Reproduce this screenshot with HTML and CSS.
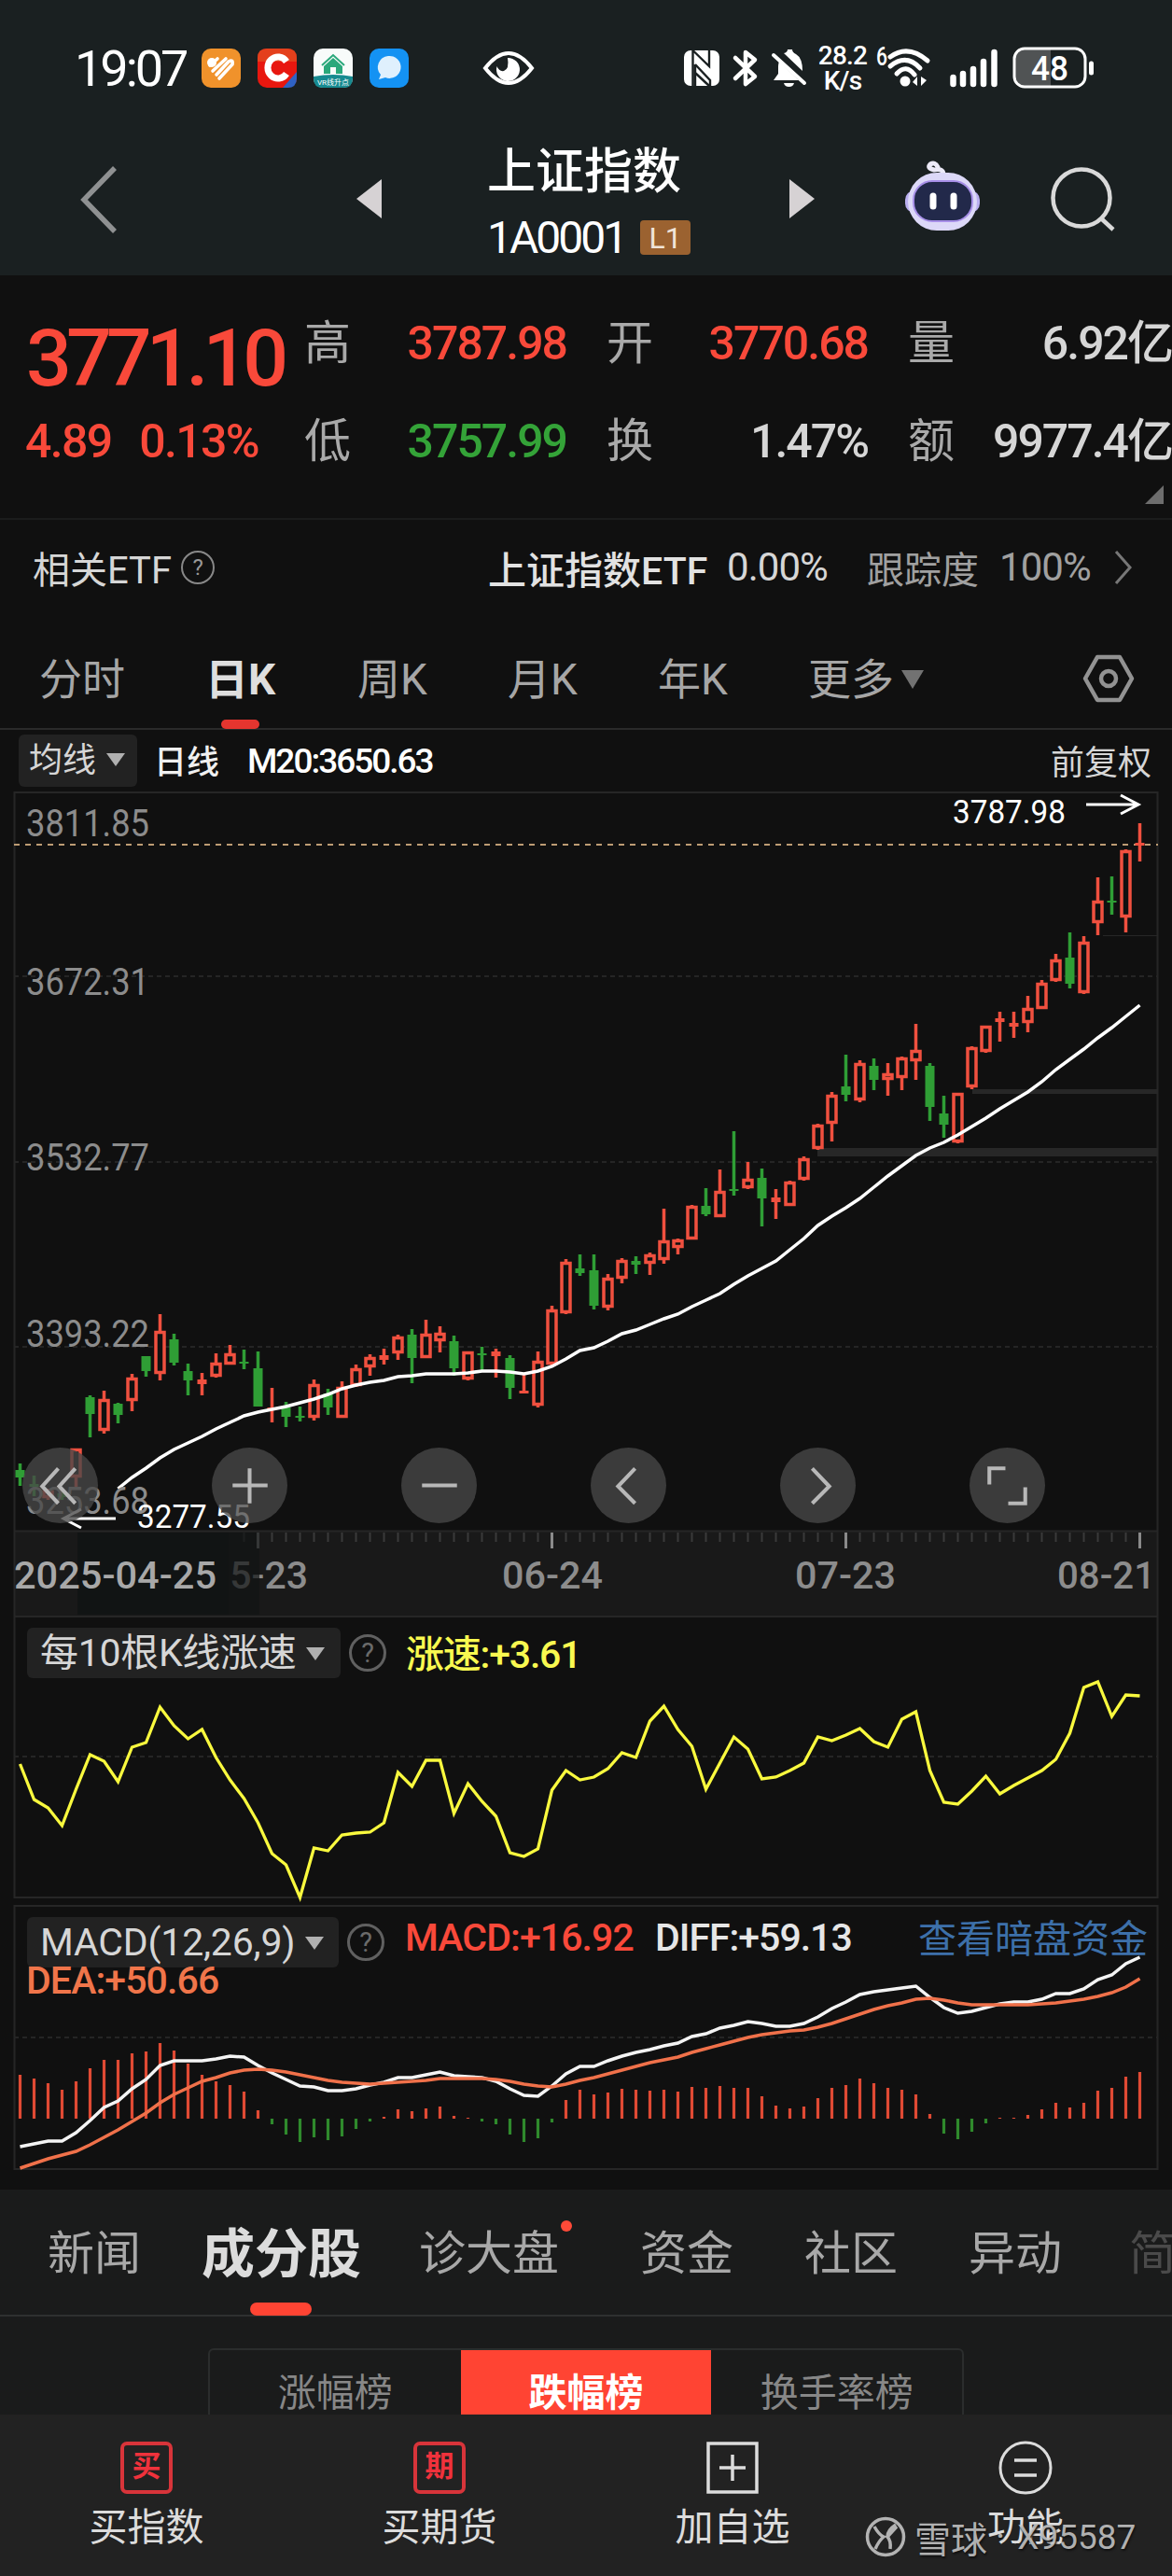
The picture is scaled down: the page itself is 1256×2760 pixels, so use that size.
FILE: index.html
```html
<!DOCTYPE html>
<html lang="zh-CN">
<head>
    <meta charset="UTF-8">
    <meta name="viewport" content="width=device-width, initial-scale=1.0">
    <title>上证指数</title>
    <link rel="stylesheet" href="styles.css">
</head>
<body>
    <div class="top">
        <div class="status-bar">
            <span class="clock">19:07</span>
            <div class="apps">
                <svg width="42" height="42" viewBox="0 0 42 42">
                    <rect width="42" height="42" rx="10" fill="#f0922b"/>
                    <path d="M9 18 L17 11 M12 24 L26 11 M16 28 L29 14 Q34 11 33 17 L19 32" fill="none" stroke="#fff" stroke-width="3.600" stroke-linecap="round"/>
                    <circle cx="11" cy="15" r="5" fill="#fff"/>
                </svg>
                <svg width="42" height="42" viewBox="0 0 42 42">
                    <rect width="42" height="42" rx="10" fill="#e8170f"/>
                    <path d="M0 14 V10 Q0 0 10 0 H32 Q42 0 42 10 V14 Z" fill="#e4401c"/>
                    <path d="M42 25 L27 42 H32 Q42 42 42 32 Z" fill="#2f62c4"/>
                    <path d="M31 14 A11 11.500 0 1 0 31 27" fill="none" stroke="#fff" stroke-width="7"/>
                </svg>
                <svg width="42" height="42" viewBox="0 0 42 42">
                    <rect width="42" height="42" rx="10" fill="#f8fbfa"/>
                    <path d="M0 30 Q21 26 42 30 V32 Q42 42 32 42 H10 Q0 42 0 32 Z" fill="#168a90"/>
                    <path d="M9 18 L21 7 L33 18" fill="none" stroke="#2aa87b" stroke-width="2"/>
                    <path d="M11 19 L21 10 L31 19 V27 H24 V20 H18 V27 H11 Z" fill="#2aa87b"/>
                    <text x="21" y="39" font-size="8" fill="#fff" text-anchor="middle">VR线升点</text>
                </svg>
                <svg width="42" height="42" viewBox="0 0 42 42">
                    <rect width="42" height="42" rx="10" fill="#1492f3"/>
                    <path d="M20 8 A12 12 0 1 1 17 31 L10 33 L12 28 A12 12 0 0 1 20 8 Z" fill="#dff0fd"/>
                </svg>
            </div>
            <svg class="eye" width="56" height="38" viewBox="0 0 56 38">
                <path d="M3 19 Q28 -13 53 19 Q28 51 3 19 Z" fill="none" stroke="#fff" stroke-width="4"/>
                <path d="M27 8 A12.500 12.500 0 1 1 15.500 17 Q18 23 23 22 Q29 20 27 8 Z" fill="#fff"/>
            </svg>
            <svg class="nfc" width="38" height="38" viewBox="0 0 38 38">
                <rect width="38" height="38" rx="7" fill="#fff"/>
                <path d="M9.500 38 V0 L27 17 V0 M12 15 L28 32 V38 M12 15 V38 M12 24 L27 38" fill="none" stroke="#1a2021" stroke-width="2.400"/>
            </svg>
            <svg class="bt" width="28" height="42" viewBox="0 0 28 42">
                <path d="M3 10 L24 30 L14 38 V4 L24 12 L3 32" fill="none" stroke="#fff" stroke-width="4.500" stroke-linejoin="round" stroke-linecap="round"/>
            </svg>
            <svg class="bell" width="38" height="42" viewBox="0 0 38 42">
                <path d="M2 34 L7 27 V19 Q7 16 8 14 L29 34 Z M13 5 Q17 4 17 1 H22 Q22 4 26 6 Q33 10 33 24 Z" fill="#fff"/>
                <path d="M13 37 H24 Q23 41 18.500 41 Q14 41 13 37 Z" fill="#fff"/>
                <path d="M2 7 L35 37" stroke="#fff" stroke-width="4" stroke-linecap="round"/>
            </svg>
            <div class="speed"><span>28.2</span><span>K/s</span></div>
            <svg class="wifi" width="58" height="44" viewBox="0 0 58 44">
                <text x="0" y="19" font-size="28" font-weight="500" fill="#fff" textLength="12" lengthAdjust="spacingAndGlyphs">6</text>
                <path d="M15 10 Q34 -4 55 14 M15 20 Q32 6 47 22 M22 28 Q32 17 41 29" fill="none" stroke="#fff" stroke-width="5" stroke-linecap="round"/>
                <circle cx="31" cy="36" r="5.500" fill="#fff"/>
                <path d="M44 31 V41 L39 37 Z M48 41 V31 L54 35 Z" fill="#fff"/>
            </svg>
            <svg class="signal" width="52" height="42" viewBox="0 0 52 42">
                <path d="M3.500 31 V38 M14 27 V38 M25 22 V38 M36 14 V38 M47.500 4 V38" stroke="#fff" stroke-width="6.500" stroke-linecap="round"/>
            </svg>
            <svg class="battery" width="88" height="46" viewBox="0 0 88 46">
                <path d="M41 3 V43 H14 Q3 43 3 32 V14 Q3 3 14 3 Z" fill="#505354"/>
                <rect x="2" y="2" width="76" height="41" rx="11" fill="none" stroke="#fff" stroke-width="3"/>
                <path d="M84.500 18 V28" stroke="#fff" stroke-width="5" stroke-linecap="round"/>
                <text x="20" y="36" font-size="37" font-weight="500" fill="#fff" textLength="40" lengthAdjust="spacingAndGlyphs">48</text>
            </svg>
        </div>
        <div class="header">
            <svg class="back" width="44" height="76" viewBox="0 0 44 76"><path d="M38 4 L5 38 L38 72" fill="none" stroke="#8f9192" stroke-width="5.500"/></svg>
            <svg class="prev" width="27" height="42" viewBox="0 0 27 42"><path d="M0 21 L27 0 V42 Z" fill="#d6d2d4"/></svg>
            <div class="title">
                <h1>上证指数</h1>
                <div class="code"><span>1A0001</span><em>L1</em></div>
            </div>
            <svg class="next" width="27" height="42" viewBox="0 0 27 42"><path d="M27 21 L0 0 V42 Z" fill="#d6d2d4"/></svg>
            <svg class="robot" width="82" height="76" viewBox="0 0 82 76">
                <path d="M42 14 Q42 7 32 9 Q24 7 28 3 Q33 0 36 6" fill="none" stroke="#eceaf8" stroke-width="5" stroke-linecap="round"/>
                <rect x="1" y="31" width="80" height="24" rx="10" fill="#b9aef0"/>
                <rect x="4" y="12" width="74" height="62" rx="31" fill="#dcd8f8"/>
                <rect x="10" y="21" width="63" height="43" rx="20" fill="#22294a" stroke="#a78fe8" stroke-width="2"/>
                <path d="M31 37 V48 M53 37 V48" stroke="#fff" stroke-width="7" stroke-linecap="round"/>
            </svg>
            <svg class="search" width="70" height="70" viewBox="0 0 70 70">
                <circle cx="33" cy="33" r="30.500" fill="none" stroke="#d9d9d9" stroke-width="4.500"/>
                <path d="M54 55 L67 67" stroke="#d9d9d9" stroke-width="4.500"/>
            </svg>
        </div>
    </div>

    <div class="quote">
        <div class="price red">3771.10</div>
        <span class="label">高</span><span class="value red">3787.98</span>
        <span class="label">开</span><span class="value red">3770.68</span>
        <span class="label">量</span><span class="value">6.92亿</span>
        <div class="change red"><span>4.89</span><span>0.13%</span></div>
        <span class="label">低</span><span class="value green">3757.99</span>
        <span class="label">换</span><span class="value">1.47%</span>
        <span class="label">额</span><span class="value">9977.4亿</span>
        <i class="corner"></i>
    </div>

    <div class="etf">
        <span>相关ETF</span>
        <i class="help small">?</i>
        <strong>上证指数ETF</strong>
        <span class="etf-rate">0.00%</span>
        <span class="dim track">跟踪度</span>
        <span class="dim track-rate">100%</span>
        <svg width="20" height="38" viewBox="0 0 20 38"><path d="M2 2 L17 19 L2 36" fill="none" stroke="#777" stroke-width="3"/></svg>
    </div>

    <div class="periods">
        <span>分时</span>
        <span class="active">日K</span>
        <span>周K</span>
        <span>月K</span>
        <span>年K</span>
        <span class="more">更多<i class="down"></i></span>
        <svg class="setting" width="56" height="52" viewBox="0 0 56 52">
            <path d="M16 3 H40 L53 26 L40 49 H16 L3 26 Z" fill="none" stroke="#929292" stroke-width="4.500" stroke-linejoin="round"/>
            <circle cx="28" cy="26" r="8" fill="none" stroke="#929292" stroke-width="4.500"/>
        </svg>
    </div>

    <div class="ma-row">
        <span class="picker">均线<i class="down"></i></span>
        <span class="line-name">日线</span>
        <span class="ma-value">M20:3650.63</span>
        <span class="adjust">前复权</span>
    </div>

    <div class="panel">
        <svg id="kline" class="chart" width="1256" height="883" viewBox="0 0 1256 883">
            <rect x="15" y="792" width="1226" height="91" fill="#191919"/>
            <path d="M15.500 883 V1 H1240.500 V883 M15 792.500 H1241" class="frame"/>
            <path d="M15 198 H1241 M15 397 H1241 M15 595 H1241" class="grid"/>
            <g fill="#272727">
                <rect x="1182" y="154" width="59" height="1"/>
                <rect x="1042" y="319" width="199" height="5"/>
                <rect x="876" y="382" width="365" height="9"/>
            </g>
            <path d="M15 57 H1241" class="last-price"/>
            <g id="ticks"></g>
            <g id="candles"></g>
            <polyline id="ma20" fill="none" stroke="#fff" stroke-width="3.500"/>
            <g class="scale">
                <text x="28" y="48" textLength="132" lengthAdjust="spacingAndGlyphs">3811.85</text>
                <text x="28" y="218" textLength="132" lengthAdjust="spacingAndGlyphs">3672.31</text>
                <text x="28" y="406" textLength="132" lengthAdjust="spacingAndGlyphs">3532.77</text>
                <text x="28" y="595" textLength="132" lengthAdjust="spacingAndGlyphs">3393.22</text>
                <text x="28" y="774" textLength="132" lengthAdjust="spacingAndGlyphs">3253.68</text>
            </g>
            <g class="extreme">
                <text x="1021" y="34" textLength="121" lengthAdjust="spacingAndGlyphs">3787.98</text>
                <path d="M1164 14 H1220 M1201 4 L1220 14 L1201 24"/>
                <text x="147" y="789" textLength="121" lengthAdjust="spacingAndGlyphs">3277.55</text>
                <path d="M124 779 H68 M87 769 L68 779 L87 789"/>
            </g>
            <g class="dates">
                <text x="223" y="854" textLength="107" lengthAdjust="spacingAndGlyphs">05-23</text>
                <text x="538" y="854" textLength="108" lengthAdjust="spacingAndGlyphs">06-24</text>
                <text x="852" y="854" textLength="108" lengthAdjust="spacingAndGlyphs">07-23</text>
                <text x="1133" y="854" textLength="105" lengthAdjust="spacingAndGlyphs">08-21</text>
                <rect x="83" y="794" width="162" height="88" fill="#111414"/>
                <rect x="232" y="794" width="46" height="88" fill="#111414" fill-opacity="0.7"/>
                <text x="15" y="854" textLength="217" lengthAdjust="spacingAndGlyphs" fill="#a8a8a8">2025-04-25</text>
            </g>
        </svg>
        <div class="tools">
            <button><svg viewBox="0 0 80 80"><path d="M38 22 L21 41 L38 59 M56 22 L39 41 L56 59"/></svg></button>
            <button><svg viewBox="0 0 80 80"><path d="M22 40 H59 M40 22 V59"/></svg></button>
            <button><svg viewBox="0 0 80 80"><path d="M22 40 H59"/></svg></button>
            <button><svg viewBox="0 0 80 80"><path d="M47 22 L29 41 L47 59"/></svg></button>
            <button><svg viewBox="0 0 80 80"><path d="M34 22 L52 41 L34 59"/></svg></button>
            <button><svg viewBox="0 0 80 80"><path d="M21 39 V22 H38 M59 42 V59 H41"/></svg></button>
        </div>
    </div>

    <div class="panel">
        <svg class="chart" width="1256" height="304" viewBox="0 0 1256 304">
            <path d="M15.500 1 H1240.500 V302 H15.500 Z" class="frame"/>
            <path d="M15 151 H1241" class="grid"/>
            <polyline id="rate" fill="none" stroke="#f9f93e" stroke-width="3.300"/>
        </svg>
        <div class="legend">
            <span class="picker wide">每10根K线涨速<i class="down"></i></span>
            <i class="help">?</i>
            <span class="yellow">涨速:+3.61</span>
        </div>
    </div>

    <div class="panel macd">
        <svg class="chart" width="1256" height="286" viewBox="0 0 1256 286">
            <path d="M15.500 1 H1240.500 V283 H15.500 Z" class="frame"/>
            <path d="M15 142 H1241" class="grid"/>
            <g id="bars"></g>
            <polyline id="diff" fill="none" stroke="#f4f4f4" stroke-width="3.500"/>
            <polyline id="dea" fill="none" stroke="#f0714a" stroke-width="3.500"/>
        </svg>
        <div class="legend">
            <span class="picker wide">MACD(12,26,9)<i class="down"></i></span>
            <i class="help">?</i>
            <span class="macd-value red">MACD:+16.92</span>
            <span class="diff-value">DIFF:+59.13</span>
            <a>查看暗盘资金</a>
        </div>
        <div class="dea-value">DEA:+50.66</div>
    </div>

    <div class="tabs">
        <span>新闻</span>
        <span class="active">成分股</span>
        <span class="dot">诊大盘</span>
        <span>资金</span>
        <span>社区</span>
        <span>异动</span>
        <span class="fade">简</span>
    </div>

    <div class="ranks">
        <div class="segment">
            <span>涨幅榜</span>
            <span class="active">跌幅榜</span>
            <span>换手率榜</span>
        </div>
    </div>

    <div class="bottom-nav">
        <div class="item">
            <span class="seal">买</span>
            <span>买指数</span>
        </div>
        <div class="item">
            <span class="seal">期</span>
            <span>买期货</span>
        </div>
        <div class="item">
            <svg width="58" height="58" viewBox="0 0 58 58"><path d="M3 3 H55 V55 H3 Z M15 29 H43 M29 15 V43" fill="none" stroke="#dcdcdc" stroke-width="3.500"/></svg>
            <span>加自选</span>
        </div>
        <div class="item">
            <svg width="58" height="58" viewBox="0 0 58 58"><circle cx="29" cy="29" r="27" fill="none" stroke="#dcdcdc" stroke-width="3"/><path d="M17 21 H41 M17 37 H41" stroke="#dcdcdc" stroke-width="3.500"/></svg>
            <span>功能</span>
        </div>
        <div class="watermark">
            <svg width="44" height="44" viewBox="0 0 44 44">
                <circle cx="22" cy="22" r="19.500" fill="none" stroke="currentColor" stroke-width="3.500"/>
                <path d="M10 11 Q15 20 20 22 Q15 26 11 35 M33 9 Q24 15 24 22 Q28 26 27 35 M34 11 L24 22" fill="none" stroke="currentColor" stroke-width="3.500"/>
            </svg>
            <span class="brand">雪球</span>
            <span class="sep">·</span>
            <span class="user">X95587</span>
        </div>
    </div>

    <script src="chart.js"></script>
</body>
</html>
```
FILE: styles.css
```css
* {
    box-sizing: border-box;
}

body {
    margin: 0;
    width: 1256px;
    height: 2760px;
    overflow: hidden;
    background-color: #101010;
    color: #d6d6d6;
    font-family: Roboto, "Noto Sans CJK SC", sans-serif;
    white-space: nowrap;
}

i, em {
    font-style: normal;
}

svg {
    flex: none;
    display: block;
    overflow: visible;
}

.red {
    color: #f9493a;
}

.green {
    color: #34a338;
}

.yellow {
    color: #f9f950;
}

/* status bar + title */
.top {
    height: 295px;
    background-color: #1a2021;
}

.status-bar {
    display: flex;
    align-items: center;
    height: 146px;
    color: #fff;
}

.clock {
    width: 134px;
    margin-left: 80px;
    font-size: 54px;
    letter-spacing: -3px;
}

.apps {
    display: flex;
    gap: 18px;
    margin-left: 2px;
}

.eye {
    margin-left: 79px;
}

.nfc {
    margin-left: 160px;
}

.bt {
    margin-left: 14px;
}

.bell {
    margin-left: 14px;
}

.speed {
    display: flex;
    flex-direction: column;
    align-items: center;
    width: 54px;
    margin-left: 11px;
    font-size: 28px;
    line-height: 27px;
    font-weight: 500;
    letter-spacing: -0.8px;
}

.wifi {
    margin-left: 9px;
}

.signal {
    margin-left: 21px;
}

.battery {
    margin-left: 15px;
}

.header {
    display: flex;
    align-items: flex-start;
    height: 149px;
    padding-top: 6px;
}

.back {
    margin: 24px 0 0 85px;
}

.prev {
    margin: 40px 0 0 253px;
}

.title {
    width: 324px;
    margin-left: 113px;
    color: #fff;
}

.title h1 {
    margin: 3px 0 0;
    font-size: 52px;
    font-weight: 500;
    line-height: 60px;
}

.code {
    display: flex;
    align-items: center;
    height: 42px;
    margin-top: 18px;
    font-size: 48px;
    letter-spacing: -3px;
}

.code em {
    width: 54px;
    height: 37px;
    margin-left: 16px;
    border-radius: 4px;
    background-color: #9b6230;
    color: #f0e4d8;
    font-size: 32px;
    line-height: 38px;
    letter-spacing: 0;
    text-align: center;
}

.next {
    margin: 40px 0 0 0;
}

.robot {
    margin: 21px 0 0 96px;
}

.search {
    margin: 27px 0 0 75px;
}

/* quote */
.quote {
    position: relative;
    display: grid;
    grid-template-columns: 326px 50px 231px 50px 273px 50px 276px;
    grid-template-rows: 105px 105px;
    align-items: center;
    height: 262px;
    padding-top: 20px;
    border-bottom: 2px solid #1b1c1c;
    font-size: 50px;
    letter-spacing: -2px;
    line-height: 60px;
}

.quote .label {
    color: #a9a9a9;
    letter-spacing: 0;
    text-align: left;
}

.quote .value {
    text-align: right;
    font-weight: 500;
}

.quote .value + .label {
    width: 93px;
    padding-left: 43px;
}

.price {
    padding: 32px 0 0 28px;
    font-size: 86px;
    font-weight: 500;
    letter-spacing: -6px;
    line-height: 86px;
}

.change {
    display: flex;
    gap: 30px;
    padding-left: 27px;
    font-weight: 500;
    letter-spacing: -1.7px;
}

.corner {
    position: absolute;
    right: 9px;
    bottom: 15px;
    border-left: 20px solid transparent;
    border-bottom: 20px solid #6d6d6d;
}

/* etf */
.etf {
    display: flex;
    align-items: center;
    height: 101px;
    margin-bottom: 2px;
    padding-left: 35px;
    font-size: 40px;
}

.etf strong {
    width: 236px;
    margin-left: 293px;
    color: #e2e2e2;
    font-weight: 500;
    font-size: 41px;
}

.etf-rate {
    width: 110px;
    margin-left: 20px;
    font-size: 42px;
    letter-spacing: -1px;
}

.dim {
    color: #a0a0a0;
}

.track {
    margin-left: 40px;
}

.track-rate {
    width: 100px;
    margin-left: 22px;
    font-size: 42px;
    letter-spacing: -1px;
}

.etf svg {
    margin-left: 23px;
}

.help {
    display: block;
    flex: none;
    width: 40px;
    height: 40px;
    margin-left: 9px;
    border: 3px solid #606060;
    border-radius: 50%;
    color: #6a6a6a;
    font-size: 29px;
    line-height: 35px;
    text-align: center;
}

.help.small {
    width: 36px;
    height: 36px;
    margin-left: 10px;
    border-width: 2px;
    border-color: #888;
    color: #999;
    font-size: 24px;
    line-height: 33px;
}

/* period tabs */
.periods {
    display: flex;
    align-items: center;
    height: 122px;
    padding: 14px 0 0 42px;
    border-bottom: 2px solid #2a2a2a;
    color: #a6a6a6;
    font-size: 46px;
}

.periods span {
    position: relative;
    top: -3px;
    width: 91px;
    margin-right: 70px;
}

.periods span:first-child {
    margin-right: 87px;
}

.periods .more {
    width: 124px;
    margin-right: 170px;
}

.periods .active {
    width: 76px;
    margin-right: 87px;
    color: #dedede;
    font-weight: 700;
}

.periods .active::after {
    content: "";
    position: absolute;
    left: 17px;
    bottom: -24px;
    width: 41px;
    height: 10px;
    border-radius: 5px;
    background-color: #e5352f;
}

.down {
    display: inline-block;
    margin-left: 11px;
    border: 10px solid transparent;
    border-top: 14px solid #b0b0b0;
    border-bottom: 0;
    vertical-align: 6px;
}

.more .down {
    border-width: 20px 12px 0;
    border-top-color: #727272;
    margin-left: 8px;
}

.ma-row {
    display: flex;
    align-items: center;
    height: 66px;
    padding: 0 22px 0 20px;
    font-size: 36px;
}

.picker {
    flex: none;
    width: 127px;
    height: 56px;
    padding-left: 11px;
    border-radius: 6px;
    background-color: #222;
    line-height: 56px;
}

.line-name {
    margin: -3px 0 0 18px;
    color: #f0f0f0;
    font-size: 35px;
    font-weight: 500;
}

.ma-value {
    margin-left: 30px;
    color: #fff;
    font-size: 37px;
    font-weight: 500;
    letter-spacing: -2px;
}

.adjust {
    margin: -3px 0 0 auto;
}

/* charts */
.panel {
    display: grid;
}

.chart,
.legend {
    grid-area: 1 / 1;
}

.panel .chart text {
    font-family: Roboto, sans-serif;
}

.frame {
    fill: none;
    stroke: #262626;
    stroke-width: 2;
}

.grid {
    fill: none;
    stroke: #252525;
    stroke-width: 2;
    stroke-dasharray: 5 4;
}

.last-price {
    stroke: #bd9c74;
    stroke-width: 2;
    stroke-dasharray: 6 6;
}

.scale text {
    fill: #8c8c8c;
    font-size: 40px;
}

.extreme text {
    fill: #fff;
    font-size: 35px;
}

.extreme path {
    fill: none;
    stroke: #fff;
    stroke-width: 3;
}

.dates {
    fill: #8c8c8c;
    font-size: 40px;
    font-weight: 500;
}

.tools {
    grid-area: 1 / 1;
    align-self: end;
    display: flex;
    gap: 122px;
    padding: 0 0 99px 24px;
}

.tools button {
    width: 81px;
    height: 81px;
    padding: 0;
    border: 0;
    border-radius: 50%;
    background-color: rgba(72, 72, 72, 0.78);
}

.tools path {
    fill: none;
    stroke: #b8b8b8;
    stroke-width: 4;
}

.legend {
    display: flex;
    align-items: center;
    align-self: start;
    height: 54px;
    margin-top: 13px;
    padding-left: 29px;
    font-size: 41px;
}

.picker.wide {
    width: 336px;
    height: 54px;
    padding-left: 14px;
    line-height: 54px;
    letter-spacing: -0.3px;
}

.legend .yellow {
    margin: -4px 0 0 21px;
    font-weight: 500;
    letter-spacing: -1.2px;
}

.macd {
    position: relative;
    height: 305px;
    margin-top: 6px;
}

.macd .picker {
    width: 334px;
    letter-spacing: -0.2px;
}

.macd-value {
    width: 268px;
    margin: -10px 0 0 22px;
}

.diff-value {
    width: 282px;
    margin-top: -10px;
    color: #e6e6e6;
    font-weight: 500;
    letter-spacing: -1px;
}

.macd-value,
.dea-value {
    font-weight: 500;
    letter-spacing: -0.9px;
}

.legend a {
    margin-top: -15px;
    color: #3d70aa;
}

.dea-value {
    position: absolute;
    left: 28px;
    top: 56px;
    color: #f0754a;
    font-size: 41px;
    line-height: 50px;
}

/* content tabs */
.tabs {
    display: flex;
    align-items: center;
    height: 136px;
    padding: 0 0 6px 51px;
    border-bottom: 2px solid #2e3030;
    background-color: #1a1b1b;
    color: #a8a8a8;
    font-size: 50px;
}

.tabs span {
    position: relative;
    flex: none;
    width: 100px;
    margin-right: 76px;
}

.tabs span:first-child {
    margin-right: 65px;
}

.tabs .active {
    width: 170px;
    margin-right: 63px;
    color: #dcdcdc;
    font-size: 57px;
    font-weight: 700;
}

.tabs .active::after {
    content: "";
    position: absolute;
    left: 52px;
    bottom: -30px;
    width: 66px;
    height: 14px;
    border-radius: 7px;
    background-color: #ff4433;
}

.tabs .dot {
    width: 150px;
    margin-right: 87px;
}

.tabs .dot::after {
    content: "";
    position: absolute;
    right: -14px;
    top: 5px;
    width: 12px;
    height: 12px;
    border-radius: 50%;
    background-color: #ff4a38;
}

.tabs .fade {
    margin-left: -4px;
    color: #4a4a4a;
}

.ranks {
    height: 105px;
    padding: 34px 223px 0;
    overflow: hidden;
    background-color: #1a1b1b;
}

.segment {
    display: flex;
    height: 94px;
    border: 2px solid #2b2d2d;
    border-radius: 6px;
}

.segment span {
    flex: 1;
    color: #878787;
    font-size: 41px;
    line-height: 92px;
    text-align: center;
}

.segment .active {
    background-color: #ff4433;
    color: #fff;
    font-weight: 700;
}

/* bottom bar */
.bottom-nav {
    position: relative;
    display: flex;
    height: 173px;
    background-color: #222;
}

.item {
    flex: 1;
    display: flex;
    flex-direction: column;
    align-items: center;
    padding-top: 28px;
    color: #dcdcdc;
    font-size: 41px;
    line-height: 70px;
}

.seal {
    width: 56px;
    height: 56px;
    margin: 1px 0;
    border: 4px solid #d8343a;
    border-radius: 7px;
    color: #f0323c;
    font-size: 31px;
    font-weight: 700;
    line-height: 46px;
    text-align: center;
}

/* author mark over the bar */
.watermark {
    position: absolute;
    left: 927px;
    top: 108px;
    display: flex;
    align-items: center;
    height: 46px;
    color: rgba(205, 205, 205, 0.85);
    font-size: 39px;
    text-shadow: 1px 2px 2px #111;
}

.brand {
    margin-left: 9px;
}

.sep {
    margin-left: 9px;
}

.user {
    margin-left: 13px;
    font-size: 37px;
}
```
FILE: chart.js
```js
var STEP = 15;
var FIRST = 21.5;
var RED = '#f0503f';
var GREEN = '#2f9e35';

// [high, body top, body bottom, low, up]
var candles = [
    [720,727,735,744,0],[733,742,745,755,0],[747,749,757,759,1],[750,752,756,759,0],[704,704,735,747,1],
    [647,649,667,692,0],[642,651,685,688,1],[655,656,668,677,0],[624,628,653,664,1],[605,605,621,627,0],
    [560,578,624,631,1],[581,587,612,615,0],[613,621,631,647,0],[623,630,635,647,1],[602,612,627,628,1],
    [593,602,614,614,1],[598,611,613,619,0],[600,618,659,659,0],[639,660,662,676,1],[654,660,670,681,0],
    [659,669,670,675,0],[630,635,671,674,1],[640,645,660,668,0],[632,638,671,671,1],[614,618,637,638,1],
    [603,606,617,626,1],[597,604,609,614,1],[582,584,602,609,1],[576,582,607,634,0],[566,581,607,607,1],
    [573,580,589,601,1],[583,589,618,626,0],[600,600,630,631,1],[595,602,604,620,0],[597,600,605,628,1],
    [604,607,639,651,0],[625,642,645,645,1],[600,610,658,660,1],[551,555,614,615,1],[501,504,559,560,1],
    [496,511,516,519,0],[496,513,551,555,0],[517,521,553,556,1],[500,502,522,527,1],[498,503,507,517,0],
    [494,496,506,518,1],[447,481,502,506,1],[479,480,489,496,1],[443,444,480,480,1],[425,444,453,455,0],
    [405,428,456,456,1],[364,426,428,433,0],[397,415,425,426,1],[404,414,436,466,0],[426,435,440,458,1],
    [417,418,444,444,1],[391,393,416,417,1],[356,357,383,384,1],[322,325,356,375,1],[282,316,325,332,0],
    [288,291,331,333,1],[286,294,309,320,0],[291,302,309,326,1],[284,285,307,320,1],[249,277,289,309,1],
    [291,294,338,353,0],[326,345,357,371,0],[323,323,376,377,1],[273,274,317,319,1],[251,251,279,280,1],
    [236,243,247,268,1],[236,248,252,264,1],[219,232,248,258,1],[202,205,233,233,1],[174,180,203,204,1],
    [151,178,206,211,0],[155,161,216,217,1],[92,117,141,154,1],[91,117,119,132,0],[62,63,135,151,1],
    [34,55,58,75,1]
];

// starts at the 8th bar
var ma20 = [747,735,725,714,705,698,691,683,676,669,665,662,659,655,651,646,640,636,633,631,627,626,624,624,
    624,623,621,621,622,624,621,616,608,599,596,589,581,577,571,565,560,552,545,538,528,519,511,503,491,479,
    465,455,446,436,424,412,401,390,382,376,368,359,350,340,331,322,311,298,287,276,264,253,241,229];

var rate = [159,197,206,225,186,149,156,178,141,136,98,118,132,122,152,176,196,222,255,267,302,249,252,235,
    233,232,222,168,183,155,155,212,180,199,215,254,258,250,187,166,176,173,164,147,152,113,97,122,140,186,
    158,130,143,175,173,166,158,130,134,128,121,135,141,111,103,166,200,202,188,172,191,182,174,166,154,126,
    77,71,108,85,86];

var macd = [47,43,38,31,40,54,63,63,70,72,81,73,59,47,40,36,29,9,-6,-17,-25,-20,-23,-19,-11,-3,2,10,8,11,13,
    3,1,-3,-6,-17,-25,-21,-4,20,31,26,28,32,31,30,31,29,34,33,35,33,33,24,14,11,13,22,33,36,43,38,33,31,26,
    5,-16,-22,-14,-5,1,1,4,10,17,12,17,30,33,45,50];

var diff = [259,256,253,253,244,231,217,210,197,187,172,167,167,167,165,162,163,172,180,187,194,195,199,199,
    197,193,190,185,185,182,179,183,184,185,189,197,204,205,194,181,173,173,167,162,158,155,151,148,141,138,
    132,129,125,127,130,130,127,120,111,104,96,93,91,89,87,99,110,116,114,110,106,104,104,101,95,95,90,80,
    75,63,56];

var dea = [282,277,272,268,264,257,249,241,232,223,212,203,196,189,185,180,177,176,177,179,182,185,188,190,
    191,192,191,190,189,188,186,186,186,186,187,189,192,194,195,192,188,185,181,177,173,169,166,163,158,154,
    150,146,142,139,137,135,134,131,127,122,117,112,108,105,101,100,102,105,107,107,107,107,107,106,105,103,
    101,98,94,88,79];

function x(i) {
    return FIRST + i * STEP;
}

function line(id, values, start) {
    var points = values.map(function(y, i) {
        return x(i + start) + ',' + y;
    });
    document.getElementById(id).setAttribute('points', points.join(' '));
}

function stroke(x1, y1, y2, color, width) {
    return '<path d="M' + x1 + ' ' + y1 + 'V' + y2 + '" stroke="' + color + '" stroke-width="' + width + '"/>';
}

var html = '';
candles.forEach(function(c, i) {
    var color = c[4] ? RED : GREEN;
    var h = Math.max(c[2] - c[1], 2);
    html += stroke(x(i), c[0], c[1], color, 3.5) + stroke(x(i), c[2], c[3], color, 3.5);
    if (c[4] && h > 5) {
        html += '<rect x="' + (x(i) - 4.5) + '" y="' + (c[1] + 1.5) + '" width="9" height="' + (h - 3) +
            '" fill="#101010" stroke="' + color + '" stroke-width="3.5"/>';
    } else {
        html += '<rect x="' + (x(i) - 5) + '" y="' + c[1] + '" width="10" height="' + h + '" fill="' + color + '"/>';
    }
});
document.getElementById('candles').innerHTML = html;

html = '';
for (var i = 16; i <= 80; i++) {
    var month = i === 17 || i === 38 || i === 59 || i === 80;
    html += stroke(x(i), 794, month ? 811 : 804, month ? '#8a8a8a' : '#3a3a3a', month ? 3 : 2);
}
document.getElementById('ticks').innerHTML = html;

html = '';
macd.forEach(function(v, i) {
    html += stroke(x(i), 229, 229 - v, v > 0 ? '#e04a34' : '#2f8a2c', 3.2);
});
document.getElementById('bars').innerHTML = html;

line('ma20', ma20, 7);
line('rate', rate, 0);
line('diff', diff, 0);
line('dea', dea, 0);
```
